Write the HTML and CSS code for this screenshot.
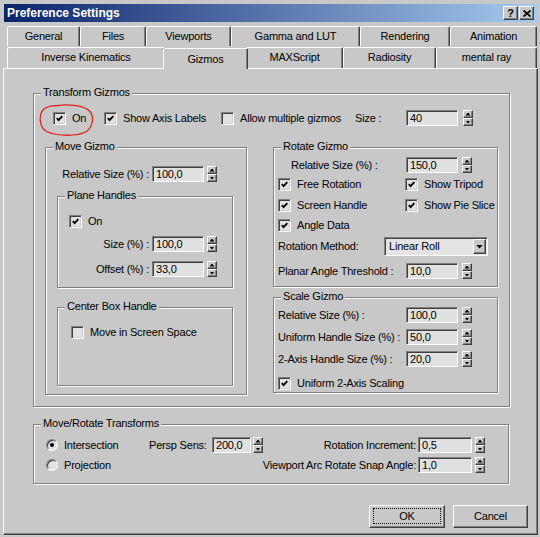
FILE: index.html
```html
<!DOCTYPE html>
<html>
<head>
<meta charset="utf-8">
<title>Preference Settings</title>
<link rel="stylesheet" href="styles.css">
</head>
<body>
<div class="dialog">
  <div class="titlebar">
    <span class="title">Preference Settings</span>
    <div class="capbtns">
      <span class="capbtn help">?</span>
      <span class="capbtn"><svg width="8" height="7" viewBox="0 0 8 7"><path d="M0.5 0.5 L7.5 6.5 M7.5 0.5 L0.5 6.5" stroke="#000" stroke-width="1.7" fill="none"/></svg></span>
    </div>
  </div>

  <div class="tabrow back">
    <div class="tab t-general">General</div>
    <div class="tab t-files">Files</div>
    <div class="tab t-viewports">Viewports</div>
    <div class="tab t-gamma">Gamma and LUT</div>
    <div class="tab t-rendering">Rendering</div>
    <div class="tab t-animation">Animation</div>
  </div>
  <div class="tabrow front">
    <div class="tab t-ik">Inverse Kinematics</div>
    <div class="tab t-gizmos selected">Gizmos</div>
    <div class="tab t-maxscript">MAXScript</div>
    <div class="tab t-radiosity">Radiosity</div>
    <div class="tab t-mental">mental ray</div>
  </div>

  <div class="page">
    <div class="group tg">
      <div class="legend"><span>Transform Gizmos</span></div>
      <div class="row tg-top">
        <div class="chk c-on">
          <span class="cb"><svg class="tick" width="7" height="7" viewBox="0 0 7 7"><path d="M0.8 3.2 L2.6 5.2 L6.3 1.2" stroke="#000" stroke-width="1.9" fill="none"/></svg></span>
          <span>On</span>
          <svg class="circle" width="56" height="33" viewBox="0 0 56 33"><path d="M17 1.8 C29 0.2 45 0.5 51 6.5 C56.5 12 55.5 22 48.5 27.5 C40 32.5 19 32.5 8.5 27.5 C1.5 23.5 0.8 12.5 4.2 6.8 C7 2.5 12 1.2 21 1.6" stroke="#e3211d" stroke-width="1.3" fill="none" stroke-linecap="round"/></svg>
        </div>
        <div class="chk c-axis">
          <span class="cb"><svg class="tick" width="7" height="7" viewBox="0 0 7 7"><path d="M0.8 3.2 L2.6 5.2 L6.3 1.2" stroke="#000" stroke-width="1.9" fill="none"/></svg></span>
          <span>Show Axis Labels</span>
        </div>
        <div class="chk c-multi">
          <span class="cb"></span>
          <span>Allow multiple gizmos</span>
        </div>
        <span class="lbl l-size">Size :</span>
        <span class="num">40</span>
        <span class="spin sp5"><i></i><i></i></span>
      </div>

      <div class="tg-cols">
        <div class="group move">
          <div class="legend"><span>Move Gizmo</span></div>
          <div class="row mv-rel">
            <span class="lbl r l-mvrel">Relative Size (%) :</span>
            <span class="num">100,0</span>
            <span class="spin sp3"><i></i><i></i></span>
          </div>
          <div class="group plane">
            <div class="legend"><span>Plane Handles</span></div>
            <div class="row ph-on">
              <div class="chk">
                <span class="cb"><svg class="tick" width="7" height="7" viewBox="0 0 7 7"><path d="M0.8 3.2 L2.6 5.2 L6.3 1.2" stroke="#000" stroke-width="1.9" fill="none"/></svg></span>
                <span>On</span>
              </div>
            </div>
            <div class="row ph-size">
              <span class="lbl r l-ph">Size (%) :</span>
              <span class="num">100,0</span>
              <span class="spin sp3"><i></i><i></i></span>
            </div>
            <div class="row ph-off">
              <span class="lbl r l-ph">Offset (%) :</span>
              <span class="num">33,0</span>
              <span class="spin sp3"><i></i><i></i></span>
            </div>
          </div>
          <div class="group cbox">
            <div class="legend"><span>Center Box Handle</span></div>
            <div class="row cbox-row">
              <div class="chk">
                <span class="cb"></span>
                <span>Move in Screen Space</span>
              </div>
            </div>
          </div>
        </div>

        <div class="rightcol">
          <div class="group rotate">
            <div class="legend"><span>Rotate Gizmo</span></div>
            <div class="row rg-rel">
              <span class="lbl l-rgrel">Relative Size (%) :</span>
              <span class="num">150,0</span>
              <span class="spin"><i></i><i></i></span>
            </div>
            <div class="row ck-row r1">
              <div class="chk c-col1"><span class="cb"><svg class="tick" width="7" height="7" viewBox="0 0 7 7"><path d="M0.8 3.2 L2.6 5.2 L6.3 1.2" stroke="#000" stroke-width="1.9" fill="none"/></svg></span><span>Free Rotation</span></div>
              <div class="chk"><span class="cb"><svg class="tick" width="7" height="7" viewBox="0 0 7 7"><path d="M0.8 3.2 L2.6 5.2 L6.3 1.2" stroke="#000" stroke-width="1.9" fill="none"/></svg></span><span>Show Tripod</span></div>
            </div>
            <div class="row ck-row r2">
              <div class="chk c-col1"><span class="cb"><svg class="tick" width="7" height="7" viewBox="0 0 7 7"><path d="M0.8 3.2 L2.6 5.2 L6.3 1.2" stroke="#000" stroke-width="1.9" fill="none"/></svg></span><span>Screen Handle</span></div>
              <div class="chk"><span class="cb"><svg class="tick" width="7" height="7" viewBox="0 0 7 7"><path d="M0.8 3.2 L2.6 5.2 L6.3 1.2" stroke="#000" stroke-width="1.9" fill="none"/></svg></span><span>Show Pie Slice</span></div>
            </div>
            <div class="row ck-row r3">
              <div class="chk c-col1"><span class="cb"><svg class="tick" width="7" height="7" viewBox="0 0 7 7"><path d="M0.8 3.2 L2.6 5.2 L6.3 1.2" stroke="#000" stroke-width="1.9" fill="none"/></svg></span><span>Angle Data</span></div>
            </div>
            <div class="row method">
              <span class="lbl l-method">Rotation Method:</span>
              <div class="combo">
                <span>Linear Roll</span>
                <span class="combo-btn"><i></i></span>
              </div>
            </div>
            <div class="row planar">
              <span class="lbl l-rgrel">Planar Angle Threshold :</span>
              <span class="num">10,0</span>
              <span class="spin"><i></i><i></i></span>
            </div>
          </div>

          <div class="group scale">
            <div class="legend"><span>Scale Gizmo</span></div>
            <div class="row sc1">
              <span class="lbl l-sc">Relative Size (%) :</span>
              <span class="num">100,0</span>
              <span class="spin"><i></i><i></i></span>
            </div>
            <div class="row sc2">
              <span class="lbl l-sc">Uniform Handle Size (%) :</span>
              <span class="num">50,0</span>
              <span class="spin"><i></i><i></i></span>
            </div>
            <div class="row sc2">
              <span class="lbl l-sc">2-Axis Handle Size (%) :</span>
              <span class="num">20,0</span>
              <span class="spin"><i></i><i></i></span>
            </div>
            <div class="row ck-row sc4">
              <div class="chk"><span class="cb"><svg class="tick" width="7" height="7" viewBox="0 0 7 7"><path d="M0.8 3.2 L2.6 5.2 L6.3 1.2" stroke="#000" stroke-width="1.9" fill="none"/></svg></span><span>Uniform 2-Axis Scaling</span></div>
            </div>
          </div>
        </div>
      </div>
    </div>

    <div class="group mrt">
      <div class="legend"><span>Move/Rotate Transforms</span></div>
      <div class="row mrt1">
        <div class="rad r-first"><span class="radio on"><i></i></span><span>Intersection</span></div>
        <span class="lbl l-persp">Persp Sens:</span>
        <span class="num n-persp">200,0</span>
        <span class="spin sp1"><i></i><i></i></span>
        <div class="rgroup">
          <span class="lbl r">Rotation Increment:</span>
          <span class="num n-rot">0,5</span>
          <span class="spin sp2"><i></i><i></i></span>
        </div>
      </div>
      <div class="row mrt2">
        <div class="rad r-first"><span class="radio"></span><span>Projection</span></div>
        <div class="rgroup">
          <span class="lbl r">Viewport Arc Rotate Snap Angle:</span>
          <span class="num n-rot">1,0</span>
          <span class="spin sp2"><i></i><i></i></span>
        </div>
      </div>
    </div>

    <div class="btnrow">
      <div class="btn b-ok"><span class="focus">OK</span></div>
      <div class="btn b-cancel"><span class="plain">Cancel</span></div>
    </div>
  </div>
</div>
</body>
</html>
```

FILE: styles.css
```css
* { box-sizing: border-box; margin: 0; padding: 0; }
html, body { width: 540px; height: 537px; overflow: hidden; }
body {
  background: #c8c8c8;
  font-family: "Liberation Sans", Arial, sans-serif;
  font-size: 11px;
  line-height: 13px;
  letter-spacing: -0.2px;
  color: #000;
}

.dialog {
  width: 540px;
  height: 537px;
  display: flex;
  flex-direction: column;
  padding: 4px 2px 2px 3px;
}

/* title bar */
.titlebar {
  height: 18px;
  margin-left: 1px;
  flex: none;
  display: flex;
  align-items: center;
  justify-content: space-between;
  padding: 0 4px 0 3px;
  background: linear-gradient(to right, #0a246a, #a6caf0);
  color: #fff;
  font-weight: bold;
  font-size: 12px;
  letter-spacing: 0;
}
.capbtns { display: flex; gap: 1px; }
.capbtn {
  width: 15px;
  height: 14px;
  background: #c8c8c8;
  border: 1px solid;
  border-color: #fff #404040 #404040 #fff;
  box-shadow: inset -1px -1px 0 #808080;
  color: #000;
  display: flex;
  align-items: center;
  justify-content: center;
  font-size: 11px;
  font-weight: bold;
}

/* tabs */
.tabrow { display: flex; margin-left: 4px; flex: none; }
.tabrow.back { margin-top: 4px; height: 20px; }
.tabrow.front { height: 22px; align-items: flex-end; }
.tab {
  flex: none;
  height: 20px;
  border: 1px solid;
  border-bottom: none;
  border-color: #fff #404040 transparent #fff;
  box-shadow: inset -1px 0 0 #808080;
  border-radius: 2px 2px 0 0;
  text-align: center;
  line-height: 18px;
  background: #c8c8c8;
  white-space: nowrap;
}
.tabrow.front .tab { height: 21px; }
.tab.selected {
  position: relative;
  z-index: 2;
  height: 24px;
  margin: 0 -2px -1px;
  line-height: 20px;
}
.t-general { width: 73px; }
.t-files { width: 66px; }
.t-viewports { width: 85px; }
.t-gamma { width: 129px; }
.t-rendering { width: 90px; }
.t-animation { width: 87px; }
.t-ik { width: 158px; }
.t-gizmos { width: 85px; }
.t-maxscript { width: 97px; }
.t-radiosity { width: 93px; }
.t-mental { width: 101px; }

/* page */
.page {
  flex: 1;
  border: 1px solid;
  border-color: #fff #404040 #404040 #fff;
  box-shadow: inset -1px -1px 0 #808080;
  display: flex;
  flex-direction: column;
}

/* group boxes */
.group {
  flex: none;
  border: 1px solid #808080;
  box-shadow: inset 1px 1px 0 #fff, 1px 1px 0 #fff;
}
.legend { height: 0; display: flex; padding-left: 7px; }
.legend span {
  background: #c8c8c8;
  padding: 0 2px;
  height: 13px;
  margin-top: -8px;
  white-space: nowrap;
}

.row { display: flex; align-items: center; height: 16px; flex: none; }
.lbl { flex: none; white-space: nowrap; }
.lbl.r { text-align: right; padding-right: 3px; }

/* controls */
.chk { display: flex; align-items: center; gap: 6px; white-space: nowrap; flex: none; }
.cb {
  width: 13px;
  height: 13px;
  flex: none;
  background: #e2e2e2;
  border: 1px solid;
  border-color: #808080 #fff #fff #808080;
  box-shadow: inset 1px 1px 0 #404040, inset -1px -1px 0 #d0d0d0;
  display: flex;
  align-items: center;
  justify-content: center;
}
.tick { display: block; }

.rad { display: flex; align-items: center; gap: 6px; white-space: nowrap; flex: none; }
.radio {
  width: 12px;
  height: 12px;
  flex: none;
  border-radius: 50%;
  background: #e2e2e2;
  border: 1px solid;
  border-color: #808080 #fff #fff #808080;
  box-shadow: inset 1px 1px 0 #404040;
  display: flex;
  align-items: center;
  justify-content: center;
}
.radio i { width: 4px; height: 4px; border-radius: 50%; background: #000; }

.num {
  flex: none;
  width: 52px;
  height: 16px;
  background: #e0e0e0;
  border: 1px solid;
  border-color: #808080 #fff #fff #808080;
  box-shadow: inset 1px 1px 0 #404040;
  padding-left: 3px;
  line-height: 14px;
  white-space: nowrap;
}
.spin {
  flex: none;
  width: 10px;
  height: 16px;
  margin-left: 4px;
  display: flex;
  flex-direction: column;
}
.spin i {
  flex: 1;
  background: #c8c8c8;
  border: 1px solid;
  border-color: #fff #404040 #404040 #fff;
  box-shadow: inset -1px -1px 0 #808080;
  display: flex;
  align-items: center;
  justify-content: center;
}
.spin i::after {
  content: "";
  width: 5px;
  height: 3px;
  background: #000;
  clip-path: polygon(50% 0, 100% 100%, 0 100%);
}
.spin i + i::after { clip-path: polygon(0 0, 100% 0, 50% 100%); }
.sp5 { margin-left: 5px; }
.sp3 { margin-left: 3px; }
.sp2 { margin-left: 3px; }
.sp1 { margin-left: 2px; }

.combo {
  flex: none;
  width: 104px;
  height: 19px;
  background: #e4e4e4;
  border: 1px solid;
  border-color: #808080 #fff #fff #808080;
  box-shadow: inset 1px 1px 0 #404040;
  display: flex;
  align-items: center;
  justify-content: space-between;
  padding: 0 1px 0 4px;
}
.combo-btn {
  width: 13px;
  height: 15px;
  background: #c8c8c8;
  border: 1px solid;
  border-color: #fff #404040 #404040 #fff;
  box-shadow: inset -1px -1px 0 #808080;
  display: flex;
  align-items: center;
  justify-content: center;
}
.combo-btn i {
  width: 7px;
  height: 4px;
  background: #000;
  clip-path: polygon(0 0, 100% 0, 50% 100%);
}

/* Transform Gizmos */
.tg { margin: 24px 0 0 29px; width: 477px; height: 314px; }
.tg-top { margin-top: 16px; padding-left: 19px; }
.c-on { width: 51px; position: relative; }
.c-axis { width: 117px; }
.c-multi { width: 134px; }
.l-size { width: 51px; }
.circle { position: absolute; left: -15px; top: -8px; pointer-events: none; }

.tg-cols { display: flex; margin-top: 21px; padding-left: 11px; }

.move { width: 202px; height: 248px; }
.mv-rel { margin-top: 18px; }
.l-mvrel { width: 106px; }
.plane { margin: 14px 0 0 11px; width: 176px; height: 92px; }
.ph-on { margin-top: 16px; padding-left: 11px; }
.ph-size { margin-top: 7px; }
.ph-off { margin-top: 9px; }
.l-ph { width: 94px; }
.cbox { margin: 19px 0 0 11px; width: 176px; height: 79px; }
.cbox-row { margin-top: 16px; padding-left: 13px; }

.rightcol { margin-left: 26px; width: 225px; display: flex; flex-direction: column; }
.rotate { height: 140px; }
.rg-rel { margin-top: 9px; }
.l-rgrel { width: 132px; padding-left: 17px; }
.planar .l-rgrel { padding-left: 4px; }
.ck-row { padding-left: 4px; }
.r1 { margin-top: 3px; }
.r2 { margin-top: 5px; }
.r3 { margin-top: 4px; }
.c-col1 { width: 127px; }
.method { margin-top: 4px; height: 19px; }
.l-method { width: 110px; padding-left: 4px; }
.planar { margin-top: 7px; }

.scale { margin-top: 10px; height: 96px; }
.sc1 { margin-top: 9px; }
.sc2 { margin-top: 6px; }
.l-sc { width: 132px; padding-left: 4px; }
.sc4 { margin-top: 8px; }

/* Move/Rotate Transforms */
.mrt { margin: 17px 0 0 29px; width: 476px; height: 60px; }
.mrt1 { margin-top: 12px; }
.mrt2 { margin-top: 4px; }
.r-first { width: 115px; padding-left: 12px; }
.l-persp { width: 63px; }
.n-persp { width: 39px; }
.rgroup { margin-left: auto; margin-right: 23px; display: flex; align-items: center; }
.rgroup .lbl.r { padding-right: 2px; }
.n-rot { width: 54px; }

/* buttons */
.btnrow {
  display: flex;
  justify-content: flex-end;
  gap: 8px;
  margin-top: 21px;
  padding-right: 9px;
}
.btn {
  height: 23px;
  background: #c8c8c8;
  border: 1px solid;
  border-color: #fff #404040 #404040 #fff;
  box-shadow: inset -1px -1px 0 #808080;
  display: flex;
  padding: 2px 3px 3px 3px;
}
.b-ok { width: 76px; }
.b-cancel { width: 75px; }
.btn span {
  flex: 1;
  display: flex;
  align-items: center;
  justify-content: center;
}
.btn .focus { border: 1px dotted #000; }
```
